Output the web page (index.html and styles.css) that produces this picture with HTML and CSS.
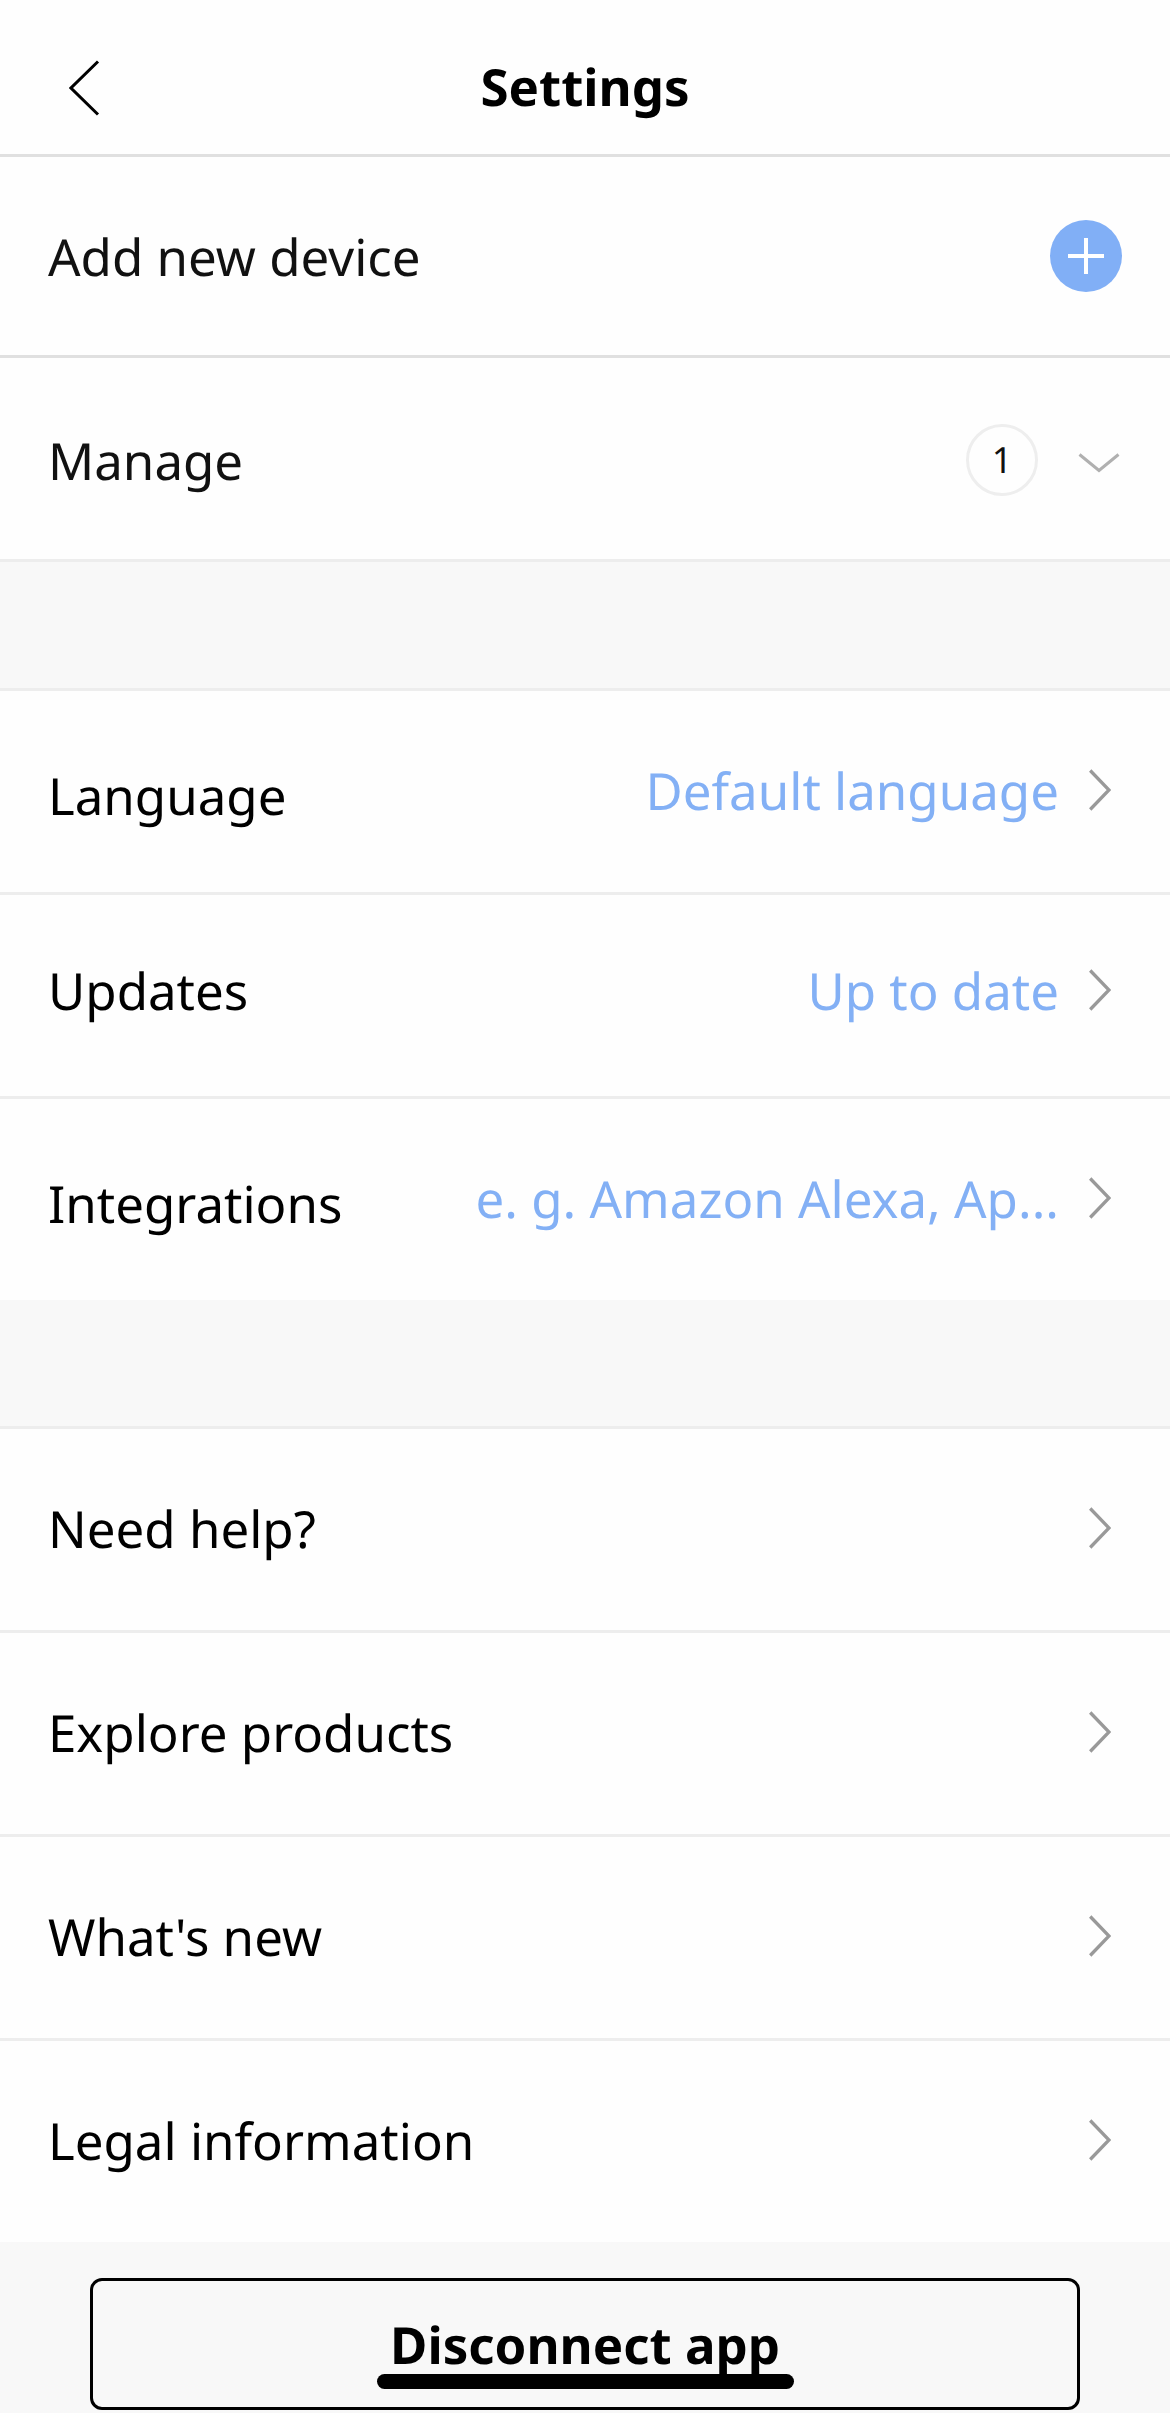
FILE: index.html
```html
<!DOCTYPE html>
<html lang="en">
<head>
<meta charset="utf-8">
<title>Settings</title>
<link rel="stylesheet" href="styles.css">
</head>
<body>
<header class="header">
  <svg class="back" viewBox="0 0 31 56"><path d="M29 1.5 2 28 29 54.5"/></svg>
  <h1 class="title">Settings</h1>
</header>
<main>
  <section class="group devices">
    <div class="row add"><span class="label">Add new device</span><svg class="plus" viewBox="0 0 72 72"><circle cx="36" cy="36" r="36"/><path d="M18 36H54M36 18V54"/></svg></div>
    <div class="row manage"><span class="label">Manage</span><span class="count">1</span><svg class="down" viewBox="0 0 42 20"><path d="M1.5 1.5 21 17.5 40.5 1.5"/></svg></div>
  </section>
  <section class="group">
    <div class="row language"><span class="label">Language</span><span class="value">Default language</span><svg class="next" viewBox="0 0 22 42"><path d="M1.2 1.5 20 21 1.2 40.5"/></svg></div>
    <div class="row updates"><span class="label">Updates</span><span class="value">Up to date</span><svg class="next" viewBox="0 0 22 42"><path d="M1.2 1.5 20 21 1.2 40.5"/></svg></div>
    <div class="row integrations"><span class="label">Integrations</span><span class="value">e. g. Amazon Alexa, Ap...</span><svg class="next" viewBox="0 0 22 42"><path d="M1.2 1.5 20 21 1.2 40.5"/></svg></div>
  </section>
  <section class="group">
    <div class="row"><span class="label">Need help?</span><svg class="next" viewBox="0 0 22 42"><path d="M1.2 1.5 20 21 1.2 40.5"/></svg></div>
    <div class="row"><span class="label">Explore products</span><svg class="next" viewBox="0 0 22 42"><path d="M1.2 1.5 20 21 1.2 40.5"/></svg></div>
    <div class="row"><span class="label">What's new</span><svg class="next" viewBox="0 0 22 42"><path d="M1.2 1.5 20 21 1.2 40.5"/></svg></div>
    <div class="row"><span class="label">Legal information</span><svg class="next" viewBox="0 0 22 42"><path d="M1.2 1.5 20 21 1.2 40.5"/></svg></div>
  </section>
</main>
<footer class="footer"><button class="disconnect">Disconnect app</button><span class="home"></span></footer>
</body>
</html>
```
FILE: styles.css
```css
* { box-sizing: border-box; }
body { margin: 0; background: #f8f8f8; color: #000; font: 51px/72px "Noto Sans", sans-serif; text-rendering: geometricPrecision; height: 2413px; overflow: hidden; }
svg { fill: none; flex: none; stroke-width: 3; display: block; }
.header { height: 154px; background: #fefefe; display: grid; grid-template-columns: 100px 1fr 100px; align-items: center; padding-top: 18px; }
.back { width: 31px; height: 56px; margin: 3px 0 0 69px; stroke: #000; }
.title { margin: 0; font-size: 51px; line-height: 72px; font-weight: 700; text-align: center; }
.group { background: #fefefe; margin-bottom: 126px; border-top: 3px solid #ededed; }
.group:last-child { margin-bottom: 0; }
.row { height: 204px; display: flex; align-items: center; padding: 0 59px 3px 48px; }
.row:first-child { height: 201px; }
.row + .row { border-top: 3px solid #ededed; }
.label { margin-right: auto; }
.next { width: 22px; height: 42px; margin: -1px 0 0 30px; stroke: #999; stroke-width: 3.3; }
.value { color: #83b0f5; }
.group.devices { border-top-color: #e0e0e0; border-bottom: 3px solid #ededed; color: #111; }
.devices .add { height: 198px; padding: 0 48px; }
.plus { width: 72px; height: 72px; }
.plus circle { fill: #81aff6; }
.plus path { stroke: #fff; stroke-width: 4; }
.row.manage { padding: 3px 50px 0 48px; border-top-color: #e0e0e0; }
.count { width: 72px; height: 72px; border: 3px solid #eee; border-radius: 50%; text-align: center; font-size: 36px; line-height: 65px; margin-right: 40px; }
.down { width: 42px; height: 20px; margin-top: 5px; stroke: #b0b0b0; }
.language .label, .integrations .label { margin-top: 10px; }
.updates { padding-bottom: 11px; }
.footer { padding: 36px 90px 0; position: relative; }
.disconnect { display: block; width: 100%; height: 132px; padding: 0; border: 3px solid #000; border-radius: 12px; background: none; color: #000; font: 700 51px/72px "Noto Sans", sans-serif; text-rendering: inherit; }
.home { position: absolute; left: 377px; top: 132px; width: 417px; height: 15px; border-radius: 8px; background: #000; }
```
